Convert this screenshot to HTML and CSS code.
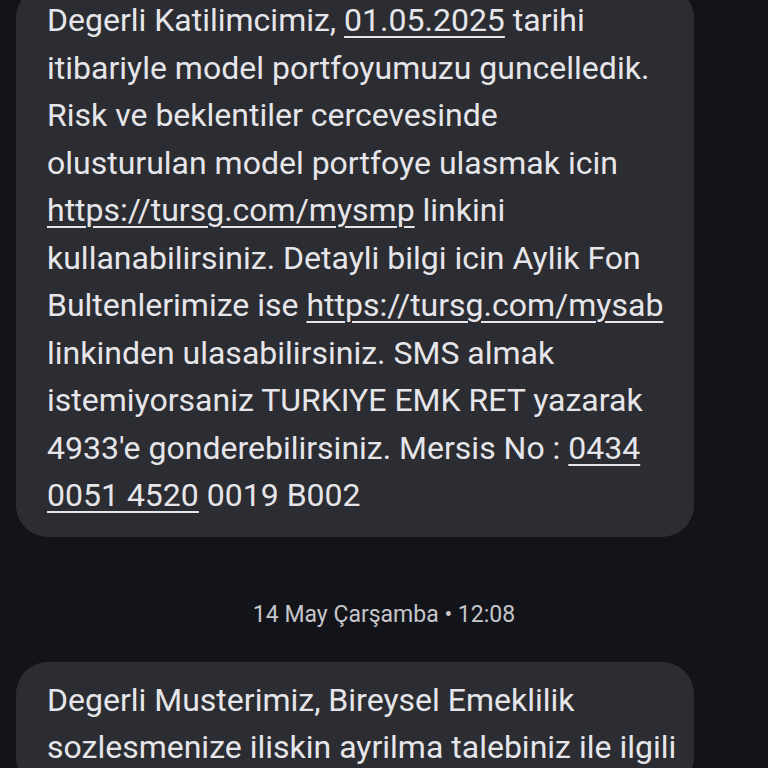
FILE: index.html
```html
<!DOCTYPE html>
<html lang="tr">
<head>
<meta charset="utf-8">
<link rel="stylesheet" href="styles.css">
</head>
<body>
<main class="thread">
  <div class="bubble first">
    <p class="msg">Degerli Katilimcimiz, <span class="link">01.05.2025</span> tarihi<br>itibariyle model portfoyumuzu guncelledik.<br>Risk ve beklentiler cercevesinde<br>olusturulan model portfoye ulasmak icin<br><span class="link">https://tursg.com/mysmp</span> linkini<br>kullanabilirsiniz. Detayli bilgi icin Aylik Fon<br>Bultenlerimize ise <span class="link">https://tursg.com/mysab</span><br>linkinden ulasabilirsiniz. SMS almak<br>istemiyorsaniz TURKIYE EMK RET yazarak<br>4933'e gonderebilirsiniz. Mersis No : <span class="link">0434</span><br><span class="link">0051 4520</span> 0019 B002</p>
  </div>
  <div class="stamp">14 May Çarşamba • 12:08</div>
  <div class="bubble">
    <p class="msg">Degerli Musterimiz, Bireysel Emeklilik<br>sozlesmenize iliskin ayrilma talebiniz ile ilgili</p>
  </div>
</main>
</body>
</html>
```
FILE: styles.css
```css
html, body {
  margin: 0;
  padding: 0;
  background: #131419;
  height: 768px;
  overflow: hidden;
}
.thread {
  display: flex;
  flex-direction: column;
  padding-left: 16px;
}
.bubble {
  width: 678px;
  box-sizing: border-box;
  background: #2c2d32;
  border-radius: 32px;
  padding: 15px 20px 17px 31px;
}
.bubble.first {
  margin-top: -14px;
  padding-top: 11px;
}
.msg {
  margin: 0;
  font-family: Roboto, "Noto Sans", sans-serif;
  font-size: 32px;
  line-height: 47.5px;
  color: #e6e6ea;
  white-space: nowrap;
}
.link {
  text-decoration: underline;
  text-decoration-thickness: 2px;
  text-underline-offset: 5px;
}
.stamp {
  margin-left: -16px;
  width: 768px;
  text-align: center;
  font-family: Roboto, "Noto Sans", sans-serif;
  font-size: 23px;
  line-height: 30px;
  color: #c6c6cb;
  padding: 63px 0 32px;
}
```
